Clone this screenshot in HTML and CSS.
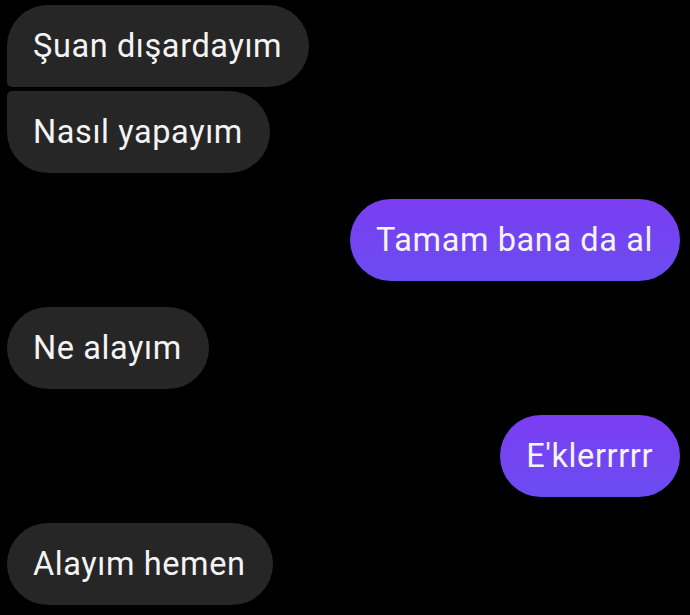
FILE: index.html
```html
<!DOCTYPE html>
<html lang="tr">
<head>
<meta charset="utf-8">
<link rel="stylesheet" href="styles.css">
</head>
<body>
<div class="chat">
  <div class="msg in first">Şuan dışardayım</div>
  <div class="msg in last gap-s">Nasıl yapayım</div>
  <div class="msg out">Tamam bana da al</div>
  <div class="msg in">Ne alayım</div>
  <div class="msg out">E'klerrrrr</div>
  <div class="msg in">Alayım hemen</div>
</div>
</body>
</html>
```
FILE: styles.css
```css
html, body {
  margin: 0;
  padding: 0;
  background: #000;
}
.chat {
  display: flex;
  flex-direction: column;
  align-items: flex-start;
  padding: 5px 10px 0 7px;
  font-family: Roboto, "Noto Sans", sans-serif;
}
.msg {
  height: 82px;
  line-height: 82px;
  padding: 0 27px 0 26px;
  border-radius: 41px;
  font-size: 32.5px;
  letter-spacing: 0.6px;
  color: #f4f4f4;
  margin-top: 26px;
  white-space: nowrap;
}
.msg:first-child { margin-top: 0; }
.msg.gap-s { margin-top: 4px; }
.in { background: #262626; }
.out {
  align-self: flex-end;
  background: linear-gradient(180deg, #7a3ef1 0%, #6b4cf2 100%);
}
.in.first { border-bottom-left-radius: 5px; }
.in.last { border-top-left-radius: 5px; }
```
